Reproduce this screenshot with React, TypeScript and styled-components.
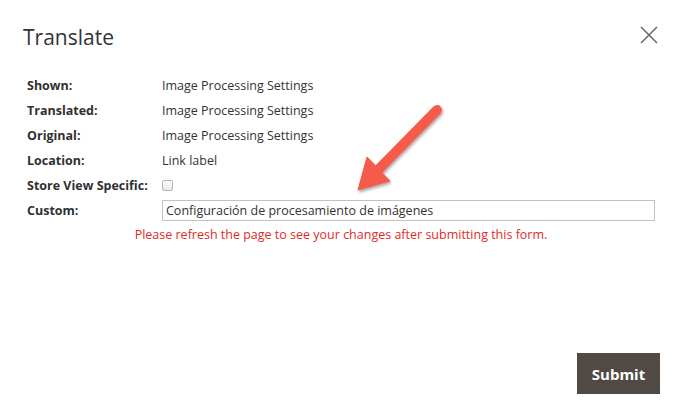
import React from 'react';
import styled, { createGlobalStyle } from 'styled-components';

const GlobalStyle = createGlobalStyle`
  html, body {
    margin: 0;
    padding: 0;
    background: #ffffff;
  }
  body {
    font-family: "Open Sans", "Liberation Sans", sans-serif;
    color: #303030;
  }
`;

const Modal = styled.div`
  position: relative;
  width: 673px;
  height: 419px;
  background: #ffffff;
  display: flex;
  flex-direction: column;
  box-sizing: border-box;
`;

const Header = styled.header`
  display: flex;
  justify-content: space-between;
  align-items: flex-start;
  padding: 22px 14px 0 23px;
  height: 51px;
  box-sizing: border-box;
`;

const Title = styled.h1`
  margin: 0;
  font-size: 21px;
  line-height: 30px;
  font-weight: 400;
  color: #333333;
`;

const CloseButton = styled.button`
  border: 0;
  background: none;
  padding: 0;
  margin-top: 3px;
  width: 20px;
  height: 20px;
  cursor: pointer;
  display: flex;
  align-items: center;
  justify-content: center;
`;

const Content = styled.div`
  padding: 22px 18px 0 27px;
`;

const Form = styled.div`
  display: grid;
  grid-template-columns: 135px 1fr;
  grid-auto-rows: 25px;
  align-items: center;
  font-size: 12.5px;
`;

const Label = styled.div<{ $tall?: boolean }>`
  font-weight: 700;
  color: #303030;
  line-height: 25px;
  white-space: nowrap;
  ${(p) => (p.$tall ? 'height: 30px; line-height: 30px;' : '')}
`;

const Value = styled.div`
  color: #333333;
  line-height: 25px;
`;

const CheckCell = styled.div`
  display: flex;
  align-items: center;
  height: 25px;
`;

const Checkbox = styled.span`
  display: inline-block;
  width: 9px;
  height: 9px;
  border: 1px solid #b5b5b5;
  border-radius: 2px;
  background: linear-gradient(#fbfbfb, #e9e9e9);
`;

const InputCell = styled.div`
  height: 30px;
  display: flex;
  align-items: center;
`;

const TextInput = styled.input`
  width: 100%;
  height: 21px;
  box-sizing: border-box;
  border: 1px solid #c2c2c2;
  padding: 0 3px;
  font-family: "Open Sans", "Liberation Sans", sans-serif;
  font-size: 12.5px;
  color: #333333;
  outline: none;
`;

const ErrorText = styled.p`
  margin: 3px 0 0;
  text-align: center;
  color: #e02b27;
  font-size: 12.5px;
  line-height: 18px;
`;

const Footer = styled.footer`
  margin-top: auto;
  display: flex;
  justify-content: flex-end;
  padding: 0 13px 25px 0;
`;

const SubmitButton = styled.button`
  width: 83px;
  height: 41px;
  border: 0;
  background: #514943;
  color: #ffffff;
  font-family: "Open Sans", "Liberation Sans", sans-serif;
  font-weight: 700;
  font-size: 15px;
  cursor: pointer;
`;

const ArrowOverlay = styled.svg`
  position: absolute;
  left: 345px;
  top: 98px;
  pointer-events: none;
`;

const CloseIcon = () => (
  <svg width="18" height="18" viewBox="0 0 18 18">
    <path d="M1 1 L17 17 M17 1 L1 17" stroke="#736963" strokeWidth="1.6" fill="none" />
  </svg>
);

const rows: [string, string][] = [
  ['Shown:', 'Image Processing Settings'],
  ['Translated:', 'Image Processing Settings'],
  ['Original:', 'Image Processing Settings'],
  ['Location:', 'Link label'],
];

const App: React.FunctionComponent = () => (
  <>
    <GlobalStyle />
    <Modal>
      <Header>
        <Title>Translate</Title>
        <CloseButton aria-label="Close">
          <CloseIcon />
        </CloseButton>
      </Header>
      <Content>
        <Form>
          {rows.map(([label, value]) => (
            <React.Fragment key={label}>
              <Label>{label}</Label>
              <Value>{value}</Value>
            </React.Fragment>
          ))}
          <Label>Store View Specific:</Label>
          <CheckCell>
            <Checkbox />
          </CheckCell>
          <Label $tall>Custom:</Label>
          <InputCell>
            <TextInput defaultValue="Configuración de procesamiento de imágenes" />
          </InputCell>
        </Form>
        <ErrorText>Please refresh the page to see your changes after submitting this form.</ErrorText>
      </Content>
      <Footer>
        <SubmitButton>Submit</SubmitButton>
      </Footer>
      <ArrowOverlay width="110" height="105" viewBox="345 98 110 105">
        <defs>
          <filter id="arrowShadow" x="-20%" y="-20%" width="140%" height="140%">
            <feDropShadow dx="1" dy="2" stdDeviation="1.5" floodColor="#000" floodOpacity="0.35" />
          </filter>
        </defs>
        <g filter="url(#arrowShadow)" fill="#f55a4b" stroke="#f55a4b">
          <line x1="437" y1="110" x2="378" y2="170" strokeWidth="10" strokeLinecap="round" />
          <polygon points="358,190 367,157 390,181" strokeWidth="1" strokeLinejoin="round" />
        </g>
      </ArrowOverlay>
    </Modal>
  </>
);

export default App;
